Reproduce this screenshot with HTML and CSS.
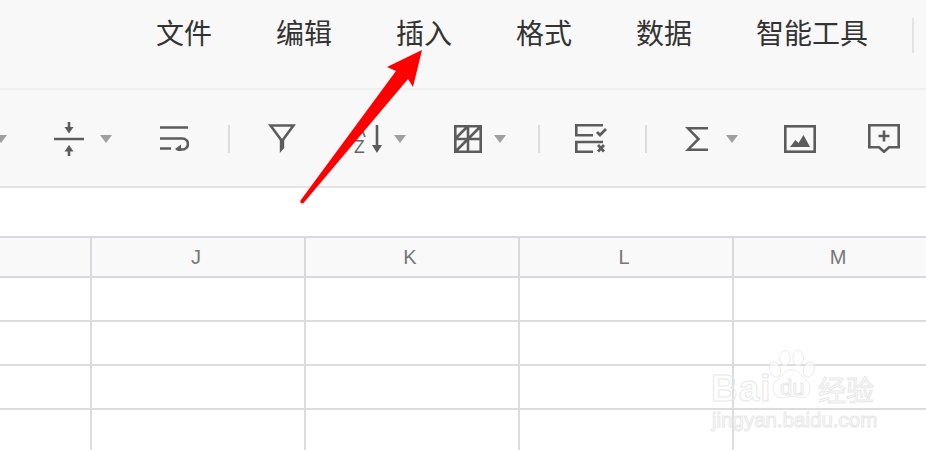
FILE: index.html
```html
<!DOCTYPE html>
<html lang="zh-CN">
<head>
  <meta charset="UTF-8" />
  <title>表格</title>
  <link rel="stylesheet" href="styles.css">
</head>
<body>
  <div class="menu">
    <span class="menu-item">文件</span>
    <span class="menu-item">编辑</span>
    <span class="menu-item">插入</span>
    <span class="menu-item">格式</span>
    <span class="menu-item">数据</span>
    <span class="menu-item">智能工具</span>
    <span class="menu-sep"></span>
  </div>

  <div class="toolbar">
    <span class="caret caret-0"></span>

    <svg class="icon icon-merge" width="30" height="34" viewBox="0 0 30 34">
      <path class="line" d="M0 17h30M15 0v6M15 29v5" />
      <path class="fill" d="M10.500 5h9L15 11.500zM10.500 29.500h9L15 23z" />
    </svg>
    <span class="caret caret-1"></span>

    <svg class="icon icon-wrap" width="29" height="25" viewBox="0 0 29 25">
      <path class="line" d="M0 1.500h28M0 12.500h22.500a5.500 5.500 0 0 1 0 11H19M0 22.500h11" />
      <path class="fill" d="M15 23l6-4.500v9z" />
    </svg>
    <span class="sep sep-1"></span>

    <svg class="icon icon-filter" width="28" height="29" viewBox="0 0 28 29">
      <path class="line" d="M2.500 1.500h23L14 17z" />
      <path class="fill" d="M11.800 15h4.400v9l-4.400 5z" />
    </svg>

    <svg class="icon icon-sort" width="31" height="34" viewBox="0 -3 31 34">
      <text class="sort-letter" x="1" y="12">A</text>
      <text class="sort-letter" x="1" y="28">Z</text>
      <path class="line" d="M24 0v22" />
      <path class="fill" d="M19 20h10l-5 8z" />
    </svg>
    <span class="caret caret-2"></span>

    <svg class="icon icon-border" width="28" height="28" viewBox="0 0 28 28">
      <path class="line" d="M1.300 1.300h25.400v25.400H1.300zM14 1v26M1 14h26M1 27L27 1M1 14L14 1" />
    </svg>
    <span class="caret caret-3"></span>
    <span class="sep sep-2"></span>

    <svg class="icon icon-check" width="32" height="29" viewBox="0 0 32 29">
      <path class="line" d="M28 1.300H1.300v10H18M28 18H1.300v9.700H18" />
      <path class="thick" d="M22 8l3 3 6-6M23 21l6 6.500M29 21l-6 6.500" />
    </svg>
    <span class="sep sep-3"></span>

    <svg class="icon icon-sigma" width="23" height="24" viewBox="0 0 23 24">
      <path class="line" d="M23 1.300H3L13.500 12 3 22.700h20" />
    </svg>
    <span class="caret caret-4"></span>

    <svg class="icon icon-image" width="32" height="28" viewBox="0 0 32 28">
      <rect class="line" x="1.300" y="1.300" width="29.400" height="25.400" />
      <path class="fill" d="M6 22l5.500-7 3 3 5-8 6.500 12z" />
    </svg>

    <svg class="icon icon-comment" width="32" height="29" viewBox="0 0 32 29">
      <path class="line" d="M1.300 1.300h29.400v22H21l-5 4.500-5-4.500H1.300z" />
      <path class="line" d="M16 6.500v11M10.500 12h11" />
    </svg>
  </div>

  <div class="formula"></div>

  <div class="sheet">
    <div class="head-cell"></div>
    <div class="head-cell">J</div>
    <div class="head-cell">K</div>
    <div class="head-cell">L</div>
    <div class="head-cell">M</div>

    <div class="cell"></div><div class="cell"></div><div class="cell"></div><div class="cell"></div><div class="cell"></div>
    <div class="cell"></div><div class="cell"></div><div class="cell"></div><div class="cell"></div><div class="cell"></div>
    <div class="cell"></div><div class="cell"></div><div class="cell"></div><div class="cell"></div><div class="cell"></div>
    <div class="cell"></div><div class="cell"></div><div class="cell"></div><div class="cell"></div><div class="cell"></div>
  </div>

  <!-- red arrow drawn over the screenshot -->
  <svg class="arrow" width="926" height="450" viewBox="0 0 926 450">
    <path d="M422 50L387 67 396 71 300.500 200.500a2 2 0 0 0 3 2.500L408 79 413 87z" />
  </svg>

  <div class="watermark">
    <svg class="paw" width="50" height="55" viewBox="0 0 56 62">
      <ellipse cx="9" cy="22" rx="6" ry="9" transform="rotate(-20 9 22)" />
      <ellipse cx="20" cy="9" rx="6" ry="8.500" />
      <ellipse cx="35" cy="9" rx="6" ry="8.500" />
      <ellipse cx="47" cy="22" rx="6" ry="9" transform="rotate(20 47 22)" />
      <path d="M28 22c8 0 10 8 17 13 6 5 4 19-6 19-5 0-7-2-11-2s-7 2-12 2C6 54 4 40 10 35c8-5 9-13 18-13z" />
    </svg>
    <span class="wm-bai">Bai</span>
    <span class="wm-du">du</span>
    <span class="wm-jy">经验</span>
    <span class="wm-url">jingyan.baidu.com</span>
  </div>
</body>
</html>
```

FILE: styles.css
```css
* {
  box-sizing: border-box;
}

html, body {
  height: 100%;
}

body {
  margin: 0;
  background: #fff;
  overflow: hidden;
  position: relative;
  font-family: "Liberation Sans", "Noto Sans CJK SC", sans-serif;
}

/* menu row */
.menu {
  height: 90px;
  background: #f8f8f8;
  border-bottom: 2px solid #efefef;
  display: flex;
  align-items: flex-start;
  padding: 14px 0 0 156px;
  gap: 64px;
}

.menu-item {
  font-family: "Noto Sans CJK SC", sans-serif;
  font-size: 28px;
  line-height: 36px;
  color: #333;
}

.menu-sep {
  width: 2px;
  height: 35px;
  margin: 4px 0 0 -20px;
  background: #e3e3e3;
}

/* toolbar */
.toolbar {
  height: 98px;
  background: #f8f8f8;
  border-bottom: 2px solid #e3e3e3;
  display: flex;
  align-items: center;
  padding-top: 1px;
}

.icon {
  flex: none;
  display: block;
}

.line {
  fill: none;
  stroke: #5c5c5c;
  stroke-width: 2.600;
}

.thick {
  fill: none;
  stroke: #5c5c5c;
  stroke-width: 2.800;
}

.fill {
  fill: #5c5c5c;
}

.sort-letter {
  font-family: "Liberation Sans", sans-serif;
  font-size: 17.500px;
  fill: #666;
}

.caret {
  flex: none;
  width: 0;
  height: 0;
  margin-top: 1px;
  border-left: 6px solid transparent;
  border-right: 6px solid transparent;
  border-top: 8px solid #a0a0a0;
}

.sep {
  flex: none;
  width: 2px;
  height: 28px;
  background: #dcdcdc;
}

.caret-0 { margin-left: -5px; }
.icon-merge { margin-left: 47px; }
.caret-1 { margin-left: 16px; }
.icon-wrap { margin-left: 48px; }
.sep-1 { margin-left: 39px; }
.icon-filter { margin-left: 38px; }
.icon-sort { margin-left: 57px; }
.caret-2 { margin-left: 10px; }
.icon-border { margin-left: 48px; }
.caret-3 { margin-left: 12px; }
.sep-2 { margin-left: 32px; }
.icon-check { margin-left: 35px; }
.sep-3 { margin-left: 38px; }
.icon-sigma { margin-left: 38px; }
.caret-4 { margin-left: 18px; }
.icon-image { margin-left: 46px; }
.icon-comment { margin-left: 52px; }

.formula {
  height: 48px;
  background: #fff;
}

/* sheet */
.sheet {
  display: grid;
  grid-template-columns: 92px 214px 214px 214px 214px;
  grid-auto-rows: 44px;
  grid-template-rows: 42px;
}

.head-cell {
  background: #f9f9f9;
  border-top: 2px solid #d9d9dd;
  border-bottom: 2px solid #d9d9dd;
  border-right: 2px solid #d9d9dd;
  display: flex;
  align-items: center;
  justify-content: center;
  padding-right: 4px;
  font-size: 20px;
  color: #777;
}

.cell {
  border-right: 2px solid #dcdcdc;
  border-bottom: 2px solid #dcdcdc;
}

/* overlays */
.arrow {
  position: absolute;
  left: 0;
  top: 0;
}

.arrow path {
  fill: #ff0000;
}

.watermark {
  position: absolute;
  left: 704px;
  top: 345px;
  width: 222px;
  height: 105px;
  color: transparent;
  -webkit-text-stroke: 1px #e8e8e8;
}

.paw {
  position: absolute;
  left: 63px;
  top: 5px;
}

.paw ellipse, .paw path {
  fill: rgba(255, 255, 255, 0.6);
  stroke: #e8e8e8;
  stroke-width: 1;
}

.wm-bai {
  position: absolute;
  left: 7px;
  top: 24px;
  font-size: 37px;
  font-weight: bold;
  letter-spacing: 1px;
  line-height: 40px;
}

.wm-du {
  position: absolute;
  left: 76px;
  top: 29px;
  font-size: 22px;
  line-height: 28px;
}

.wm-jy {
  position: absolute;
  left: 114px;
  top: 28px;
  font-family: "Noto Sans CJK SC", sans-serif;
  font-size: 28px;
  line-height: 32px;
}

.wm-url {
  position: absolute;
  left: 8px;
  top: 63px;
  font-size: 20.500px;
  line-height: 24px;
}
```
